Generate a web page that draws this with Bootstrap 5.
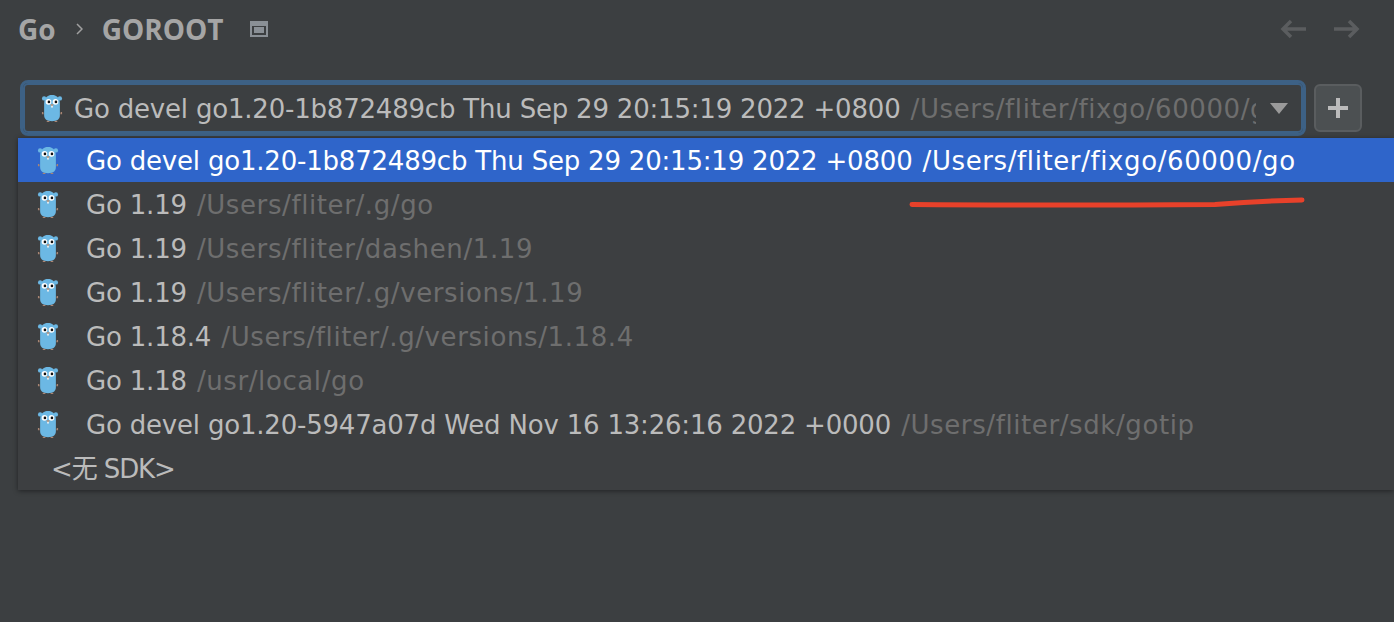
<!doctype html>
<html lang="zh"><head><meta charset="utf-8"><title>GOROOT</title>
<link rel="stylesheet" href="https://cdn.jsdelivr.net/npm/bootstrap@5.3.0/dist/css/bootstrap.min.css">
<style>
html,body{height:622px;overflow:hidden}
body{background:#3c3f41;font-family:"DejaVu Sans","Noto Sans CJK SC",sans-serif;font-size:26px;color:#bbb;position:relative;font-variant-ligatures:none;letter-spacing:-.2px}
.crumbs{height:58px;padding:0 18px;font-size:28px;font-weight:700;color:#a5a5a5;font-family:"Open Sans",sans-serif;letter-spacing:0}
.crumb-sep{margin:0 19px 0 20px}
.pin-ic{margin-left:27px}
.nav-arrows{gap:28px;margin-right:16px}
.combo-row{padding:22px 32px 0 20px;gap:8px}
.combo-box{height:56px;border:3px solid #3d6185;border-radius:8px;box-shadow:inset 0 0 0 2px #3d6185;background:#3c3f41;padding:0 15px 0 18px;min-width:0;width:1286px}
.combo-text{white-space:nowrap;overflow:hidden;width:1182px;margin-left:11px;flex:none;padding-top:2px}
.dim{color:#6e6e6e;letter-spacing:.6px;margin-left:2px}
.add-btn{width:48px;height:48px;background:#4c5052;border:2px solid #5a5d5f;border-radius:6px;padding:0}
.sdk-pop{position:absolute;left:18px;top:138px;right:0;height:352px;background:#3d3f41;box-shadow:0 1px 5px rgba(0,0,0,.45)}
.sdk-row{height:44px;padding-left:19px;white-space:nowrap}
.sdk-row>span{margin-left:27px;padding-top:2px}
.sdk-row.on{background:#2f65ca;color:#fff}
.sdk-row.on .dim{color:#fff}
.sdk-none{padding-left:33px;padding-top:3px;height:44px;letter-spacing:-1.1px}
.redline{position:absolute;left:905px;top:192px}
</style></head>
<body>
<svg width="0" height="0" class="position-absolute"><defs>
<symbol id="gopher" viewBox="0 0 24 32">
<path d="M2 20.500h-1.500v2.500h2zM22 20.500h1.500v2.500h-2z" fill="#a98573"/>
<path d="M6 30.500h3v1.500h-3zM15 30.500h3v1.500h-3z" fill="#a98573"/>
<ellipse cx="3" cy="5" rx="2.500" ry="2.500" fill="#6cb8e4"/><ellipse cx="21" cy="5" rx="2.500" ry="2.500" fill="#6cb8e4"/>
<path d="M3 11C3 4 7 1 12 1s9 3 9 10v13c0 5-3 7-9 7s-9-2-9-7z" fill="#6cb8e4"/>
<circle cx="8" cy="9" r="3.200" fill="#fff"/><circle cx="16" cy="9" r="3.200" fill="#fff"/>
<circle cx="8.500" cy="9" r="1.500" fill="#111"/><circle cx="16.500" cy="9" r="1.500" fill="#111"/>
<ellipse cx="12" cy="12.500" rx="1.800" ry="1.200" fill="#b0937f"/><rect x="11" y="13.500" width="2" height="2" fill="#eee"/>
</symbol></defs></svg>

<div class="crumbs d-flex align-items-center">
<span>Go</span>
<svg class="crumb-sep" width="7" height="14" viewBox="0 0 7 14"><path d="M1 2l5 5-5 5" fill="none" stroke="#a0a0a0" stroke-width="1.500"/></svg>
<span>GOROOT</span>
<svg class="pin-ic" width="18" height="16" viewBox="0 0 18 16"><rect x="1" y="1" width="16" height="14" fill="none" stroke="#8a9096" stroke-width="2"/><rect x="1" y="1" width="16" height="4" fill="#8a9096"/><rect x="4" y="6" width="10" height="6" fill="#8a9096"/></svg>
<div class="nav-arrows ms-auto d-flex">
<svg width="26" height="20" viewBox="0 0 26 20"><path d="M26 10H3M11 2l-8 8 8 8" fill="none" stroke="#5b5d5f" stroke-width="3.500"/></svg>
<svg width="26" height="20" viewBox="0 0 26 20"><path d="M0 10h23M15 2l8 8-8 8" fill="none" stroke="#5b5d5f" stroke-width="3.500"/></svg>
</div></div>

<div class="combo-row d-flex align-items-center">
<div class="combo-box d-flex align-items-center">
<svg width="22" height="28" class="flex-shrink-0"><use href="#gopher"/></svg>
<div class="combo-text">Go devel go1.20-1b872489cb Thu Sep 29 20:15:19 2022 +0800 <span class="dim">/Users/fliter/fixgo/60000/go</span></div>
<svg class="ms-auto flex-shrink-0" width="18" height="11" viewBox="0 0 18 11"><path d="M0 0h18l-9 11z" fill="#9a9a9a"/></svg>
</div>
<button class="add-btn btn d-flex align-items-center justify-content-center" type="button" aria-label="add"><svg width="20" height="20" viewBox="0 0 20 20"><path d="M10 0v20M0 10h20" stroke="#bbb" stroke-width="4"/></svg></button>
</div>

<div class="sdk-pop">
<div class="sdk-row on d-flex align-items-center"><svg width="22" height="28"><use href="#gopher"/></svg><span>Go devel go1.20-1b872489cb Thu Sep 29 20:15:19 2022 +0800 <span class="dim">/Users/fliter/fixgo/60000/go</span></span></div>
<div class="sdk-row d-flex align-items-center"><svg width="22" height="28"><use href="#gopher"/></svg><span>Go 1.19 <span class="dim">/Users/fliter/.g/go</span></span></div>
<div class="sdk-row d-flex align-items-center"><svg width="22" height="28"><use href="#gopher"/></svg><span>Go 1.19 <span class="dim">/Users/fliter/dashen/1.19</span></span></div>
<div class="sdk-row d-flex align-items-center"><svg width="22" height="28"><use href="#gopher"/></svg><span>Go 1.19 <span class="dim">/Users/fliter/.g/versions/1.19</span></span></div>
<div class="sdk-row d-flex align-items-center"><svg width="22" height="28"><use href="#gopher"/></svg><span>Go 1.18.4 <span class="dim">/Users/fliter/.g/versions/1.18.4</span></span></div>
<div class="sdk-row d-flex align-items-center"><svg width="22" height="28"><use href="#gopher"/></svg><span>Go 1.18 <span class="dim">/usr/local/go</span></span></div>
<div class="sdk-row d-flex align-items-center"><svg width="22" height="28"><use href="#gopher"/></svg><span>Go devel go1.20-5947a07d Wed Nov 16 13:26:16 2022 +0000 <span class="dim">/Users/fliter/sdk/gotip</span></span></div>
<div class="sdk-none d-flex align-items-center">&lt;无 SDK&gt;</div>
</div>
<svg class="redline" width="404" height="20" viewBox="0 0 404 20"><path d="M7 12.500C120 13.500 240 13 310 12.500C340 10 370 8.500 397 8" fill="none" stroke="#e8412a" stroke-width="5" stroke-linecap="round"/></svg>
</body></html>
